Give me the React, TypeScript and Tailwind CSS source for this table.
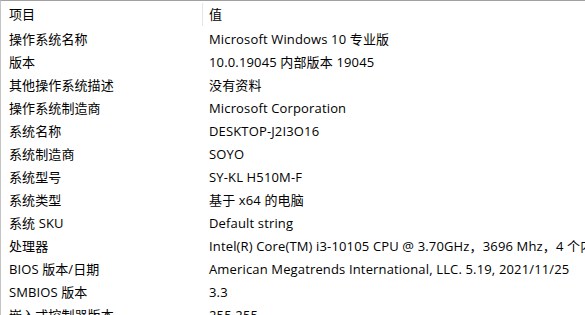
import React from 'react'

const rows: [string, string][] = [
  ['操作系统名称', 'Microsoft Windows 10 专业版'],
  ['版本', '10.0.19045 内部版本 19045'],
  ['其他操作系统描述', '没有资料'],
  ['操作系统制造商', 'Microsoft Corporation'],
  ['系统名称', 'DESKTOP-J2I3O16'],
  ['系统制造商', 'SOYO'],
  ['系统型号', 'SY-KL H510M-F'],
  ['系统类型', '基于 x64 的电脑'],
  ['系统 SKU', 'Default string'],
  ['处理器', 'Intel(R) Core(TM) i3-10105 CPU @ 3.70GHz，3696 Mhz，4 个内核，8 个逻辑处理器'],
  ['BIOS 版本/日期', 'American Megatrends International, LLC. 5.19, 2021/11/25'],
  ['SMBIOS 版本', '3.3'],
  ['嵌入式控制器版本', '255.255'],
]

export default function App() {
  return (
    <main
      className="w-[585px] h-[315px] overflow-hidden bg-white border-t border-t-[#a0a0a0] border-l border-l-[#c4c4c4] text-[13px] text-black"
      style={{ fontFamily: '"Open Sans", "Noto Sans CJK SC", sans-serif' }}
    >
      {/* header */}
      <div className="flex h-[27px] items-center">
        <div className="w-[201px] flex-shrink-0 pl-[8px] h-full flex items-center">项目</div>
        <div className="w-px h-[23px] bg-[#e5e5e5] flex-shrink-0" />
        <div className="pl-[6px]">值</div>
      </div>
      {rows.map(([k, v]) => (
        <div key={k} className="flex h-[23px] items-center whitespace-nowrap leading-[23px]">
          <div className="w-[202px] flex-shrink-0 pl-[8px] tracking-[0.1px]">{k}</div>
          <div className="pl-[6px] tracking-[0.15px]">{v}</div>
        </div>
      ))}
    </main>
  )
}
